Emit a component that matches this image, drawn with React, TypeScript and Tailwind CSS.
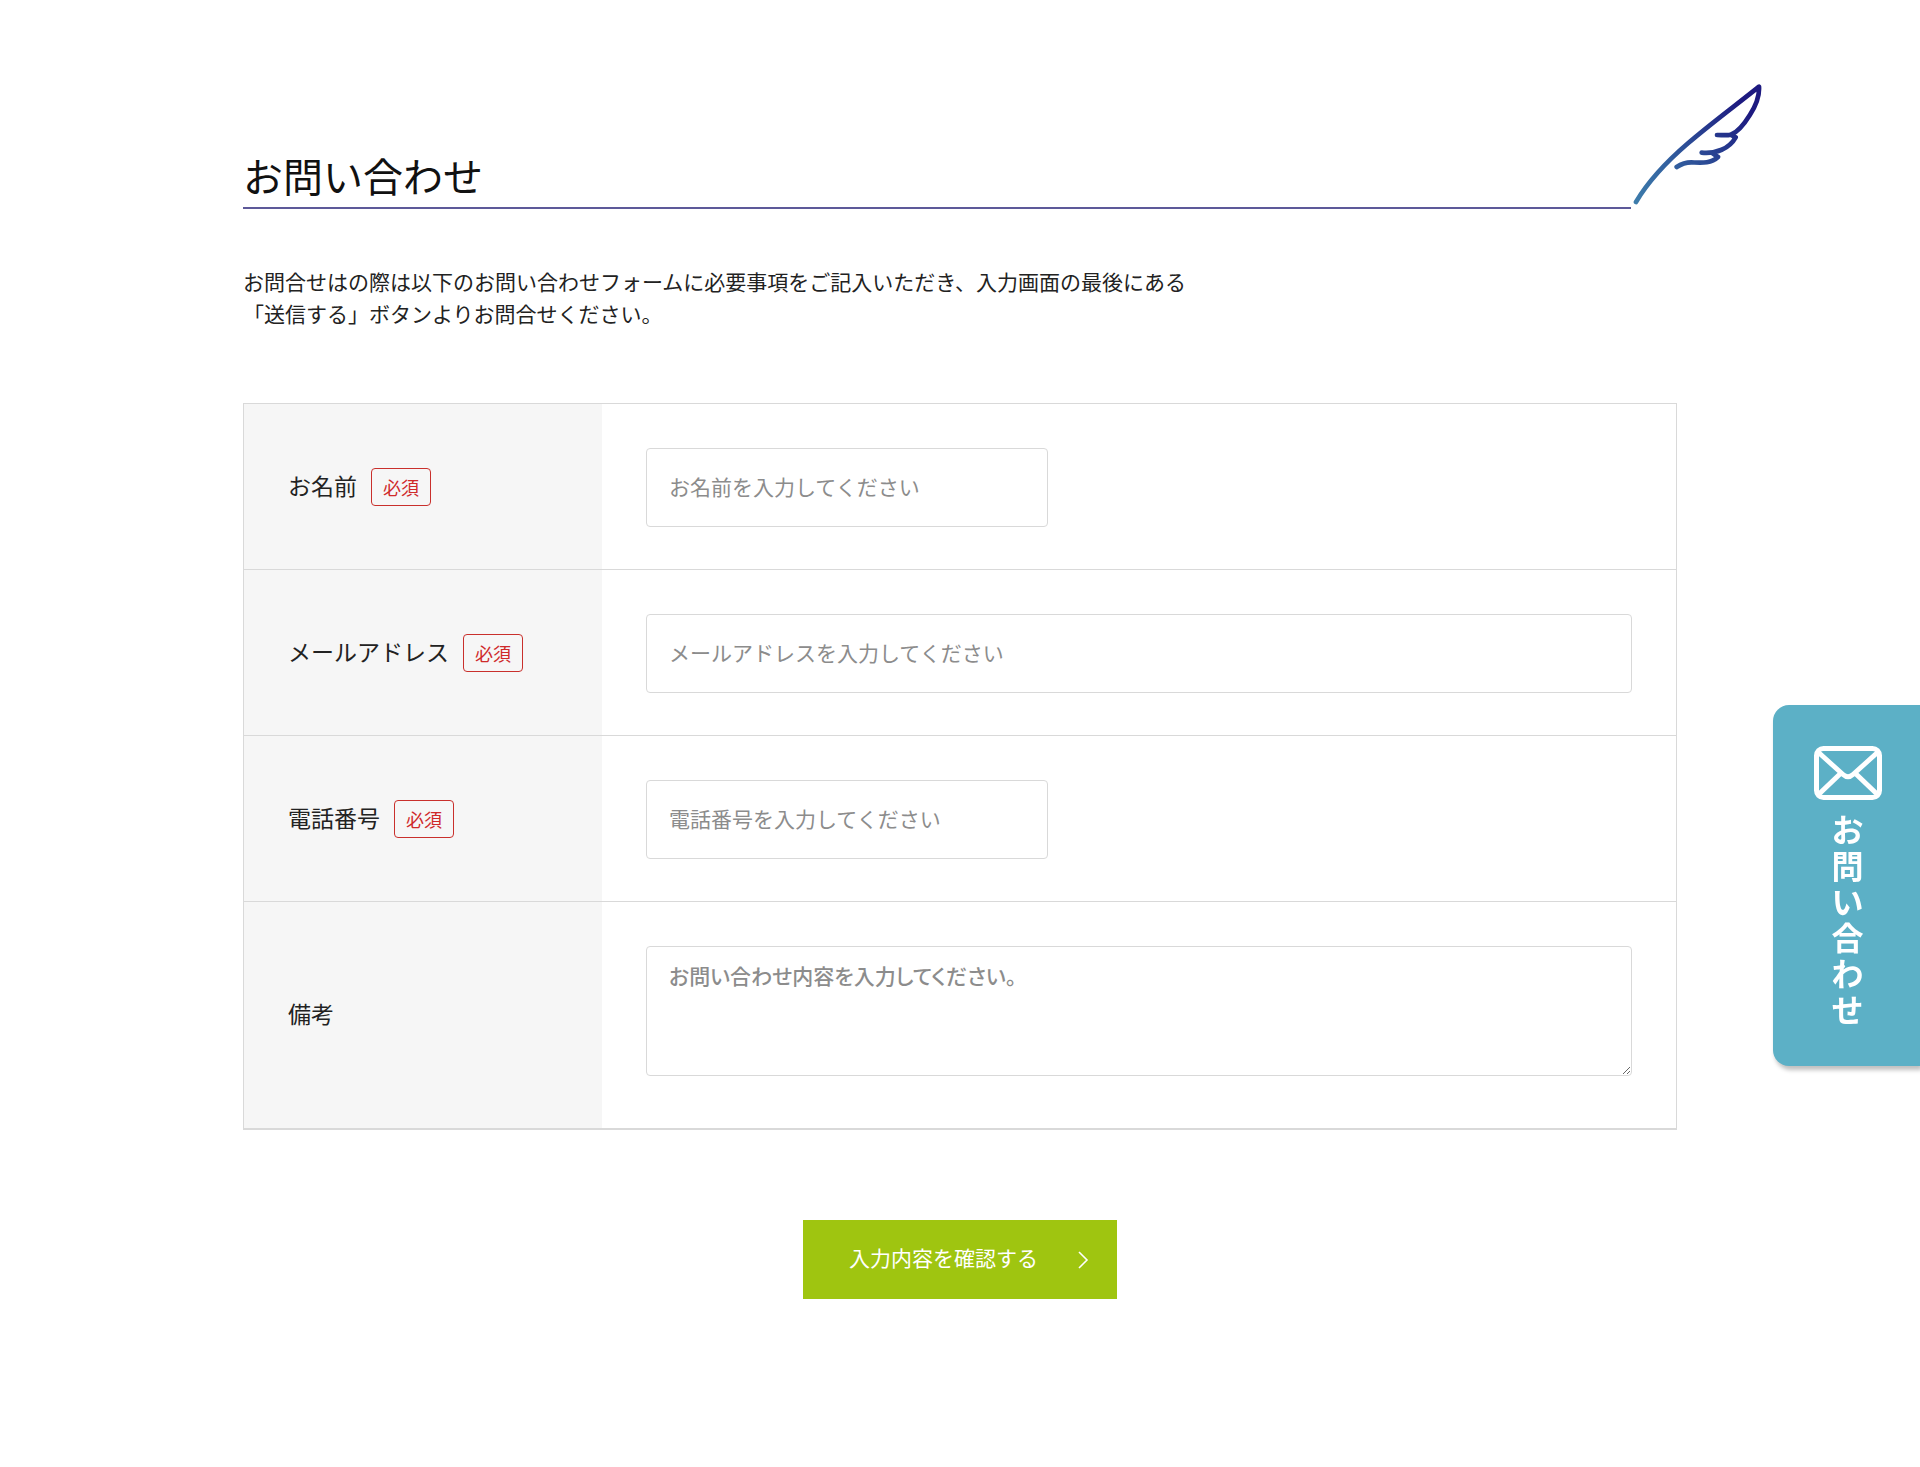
import type { ReactNode } from 'react';

type Field = {
  id: string;
  label: string;
  placeholder: string;
  type: string;
  wide?: boolean;
};

const fields: Field[] = [
  { id: 'name', label: 'お名前', placeholder: 'お名前を入力してください', type: 'text' },
  { id: 'email', label: 'メールアドレス', placeholder: 'メールアドレスを入力してください', type: 'email', wide: true },
  { id: 'tel', label: '電話番号', placeholder: '電話番号を入力してください', type: 'tel' },
];

const inputBase =
  'block rounded border border-[#d9d9d9] bg-white px-[22px] text-[21px] placeholder:text-[#8c8c8c] placeholder:opacity-100 focus:outline-none focus:border-[#5cb0c6]';

function Feather() {
  return (
    <svg viewBox="69 39 390 366" className="w-[130px] h-[122px] shrink-0" fill="none" aria-hidden="true">
      <defs>
        <linearGradient id="feather" gradientUnits="userSpaceOnUse" x1="78" y1="396" x2="400" y2="110">
          <stop offset="0" stopColor="#3d7cab" />
          <stop offset="0.35" stopColor="#32609f" />
          <stop offset="0.7" stopColor="#263a8e" />
          <stop offset="1" stopColor="#1d1a80" />
        </linearGradient>
      </defs>
      <path
        d="M78 396C122 322 178 268 234 220C306 158 380 104 447 50C449 80 438 106 420 134C404 160 386 186 362 194C350 197 336 195 321 195M362 194L377 202C358 236 318 252 275 248M308 250L324 261C302 282 272 278 244 277C222 277 212 283 200 291"
        stroke="url(#feather)"
        strokeWidth="14"
        strokeLinecap="round"
        strokeLinejoin="round"
      />
    </svg>
  );
}

function Row({ id, label, required, children }: { id: string; label: string; required?: boolean; children: ReactNode }) {
  return (
    <div className="flex border-b border-[#d9d9d9] last:border-b-2">
      <div className="flex w-1/4 shrink-0 items-center gap-[14px] bg-[#f6f6f6] pl-11">
        <label htmlFor={id} className="pb-1 text-[23px] leading-9">
          {label}
        </label>
        {required && (
          <span className="rounded border border-[#c9302c] px-[11px] text-lg leading-9 text-[#cf2a2a]">必須</span>
        )}
      </div>
      <div className="flex-1 px-11 pt-11 pb-[42px]">{children}</div>
    </div>
  );
}

function ContactTab() {
  return (
    <a
      href="#contact"
      className="fixed right-0 top-[705px] flex w-[147px] flex-col items-center rounded-l-2xl bg-[#5cb0c6] pb-10 pt-[41px] pl-0.5 text-white shadow-[2px_4px_4px_rgba(0,0,0,0.25)]"
    >
      <svg viewBox="0 0 68 54" className="w-[68px] h-[54px]" fill="none" stroke="currentColor" strokeWidth="5" aria-hidden="true">
        <rect x="2.5" y="2.5" width="63" height="49" rx="7" />
        <path d="M4 6L29 28.500Q34 33 39 28.500L64 6M4 49L26 28M64 49L42 28" />
      </svg>
      <span className="mt-2.5 w-8 break-all text-[32px] font-bold leading-9">お問い合わせ</span>
    </a>
  );
}

export default function App() {
  return (
    <div className="min-h-screen bg-white px-6 pb-40 pt-[83px] font-['Noto_Sans_CJK_JP',sans-serif] text-[#222]">
      <main id="contact" className="mx-auto max-w-[1434px]">
        {/* Title with rule, feather runs past the right edge */}
        <div className="flex items-end gap-[2px] xl:-mr-[86px]">
          <h1 className="flex-1 border-b-2 border-[#5d5999] pb-1.5 text-[40px] leading-[52px] text-[#111]">お問い合わせ</h1>
          <div className="pb-1">
            <Feather />
          </div>
        </div>

        <p className="mt-14 text-[21px] leading-8">
          お問合せはの際は以下のお問い合わせフォームに必要事項をご記入いただき、入力画面の最後にある
          <br />
          「送信する」ボタンよりお問合せください。
        </p>

        <form onSubmit={(e) => e.preventDefault()}>
          <div className="mt-[74px] border border-b-0 border-[#d9d9d9]">
            {fields.map((f) => (
              <Row key={f.id} id={f.id} label={f.label} required>
                <input
                  id={f.id}
                  name={f.id}
                  type={f.type}
                  placeholder={f.placeholder}
                  className={`${inputBase} h-[79px] pb-1 ${f.wide ? 'w-full' : 'w-full max-w-[402px]'}`}
                />
              </Row>
            ))}
            <Row id="note" label="備考">
              <textarea
                id="note"
                name="note"
                placeholder="お問い合わせ内容を入力してください。"
                className={`${inputBase} mb-2.5 h-[130px] w-full resize py-3 leading-8 font-medium [font-feature-settings:'palt']`}
              />
            </Row>
          </div>

          <button
            type="submit"
            className="mx-auto mt-[90px] flex h-[79px] w-[314px] items-center justify-between bg-[#9fc510] pl-[46px] pr-7 text-[21px] text-white"
          >
            <span className="pb-1">入力内容を確認する</span>
            <svg viewBox="0 0 12 18" className="h-[18px] w-3" fill="none" stroke="currentColor" strokeWidth="1.600" aria-hidden="true">
              <path d="M2 1L10 9L2 17" />
            </svg>
          </button>
        </form>
      </main>

      <ContactTab />
    </div>
  );
}
